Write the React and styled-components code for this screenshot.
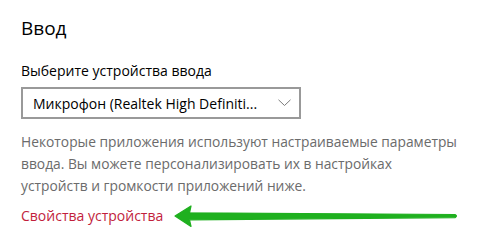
import React from 'react'
import styled, { createGlobalStyle } from 'styled-components';

const GlobalStyle = createGlobalStyle`
  body {
    margin: 0;
    background: #FFFFFF;
    font-family: "Open Sans", "Noto Sans", sans-serif;
  }
`;

const Page = styled.div`
  padding: 15px 0 0 21px;
  width: 496px;
  height: 251px;
  box-sizing: border-box;
`;

const Title = styled.h2`
  margin: 0;
  font-size: 19px;
  font-weight: 400;
  line-height: 26px;
  color: #000000;
`;

const Label = styled.div`
  margin-top: 20px;
  font-size: 14px;
  line-height: 20px;
  color: #000000;
`;

const Select = styled.div`
  margin-top: 6px;
  width: 280px;
  height: 32px;
  box-sizing: border-box;
  border: 2px solid #999999;
  display: flex;
  align-items: center;
  justify-content: space-between;
  padding: 0 8px 0 10px;
  font-size: 14px;
  color: #000000;
`;

const Description = styled.p`
  margin: 12px 0 0;
  width: 439px;
  font-size: 13.8px;
  line-height: 22px;
  color: #6b6b6b;
`;

const LinkRow = styled.div`
  margin-top: 7px;
  display: flex;
  align-items: center;
  gap: 11px;
`;

const Link = styled.span`
  font-size: 14px;
  line-height: 20px;
  color: #c21e3c;
`;

const Chevron = () => (
  <svg width="13" height="8" viewBox="0 0 13 8">
    <path d="M0.5 0.8 L6.5 6.5 L12.5 0.8" fill="none" stroke="#7a7a7a" strokeWidth="1" />
  </svg>
);

const Arrow = () => (
  <svg width="286" height="24" viewBox="0 0 286 24">
    <path
      d="M1 12 L17 2 L15.5 8.8 L281 10.5 Q284 12 281 13.6 L15.5 15.8 L17 22.5 Z"
      fill="#1fb01f"
      stroke="#1fb01f"
      strokeWidth="1.2"
      strokeLinejoin="round"
    />
  </svg>
);

const App = () => {
  return (
    <Page>
      <GlobalStyle />
      <Title>Ввод</Title>
      <Label>Выберите устройства ввода</Label>
      <Select>
        <span>Микрофон (Realtek High Definiti...</span>
        <Chevron />
      </Select>
      <Description>
        Некоторые приложения используют настраиваемые параметры ввода. Вы можете персонализировать их в настройках устройств и громкости приложений ниже.
      </Description>
      <LinkRow>
        <Link>Свойства устройства</Link>
        <Arrow />
      </LinkRow>
    </Page>
  )
}

export default App
